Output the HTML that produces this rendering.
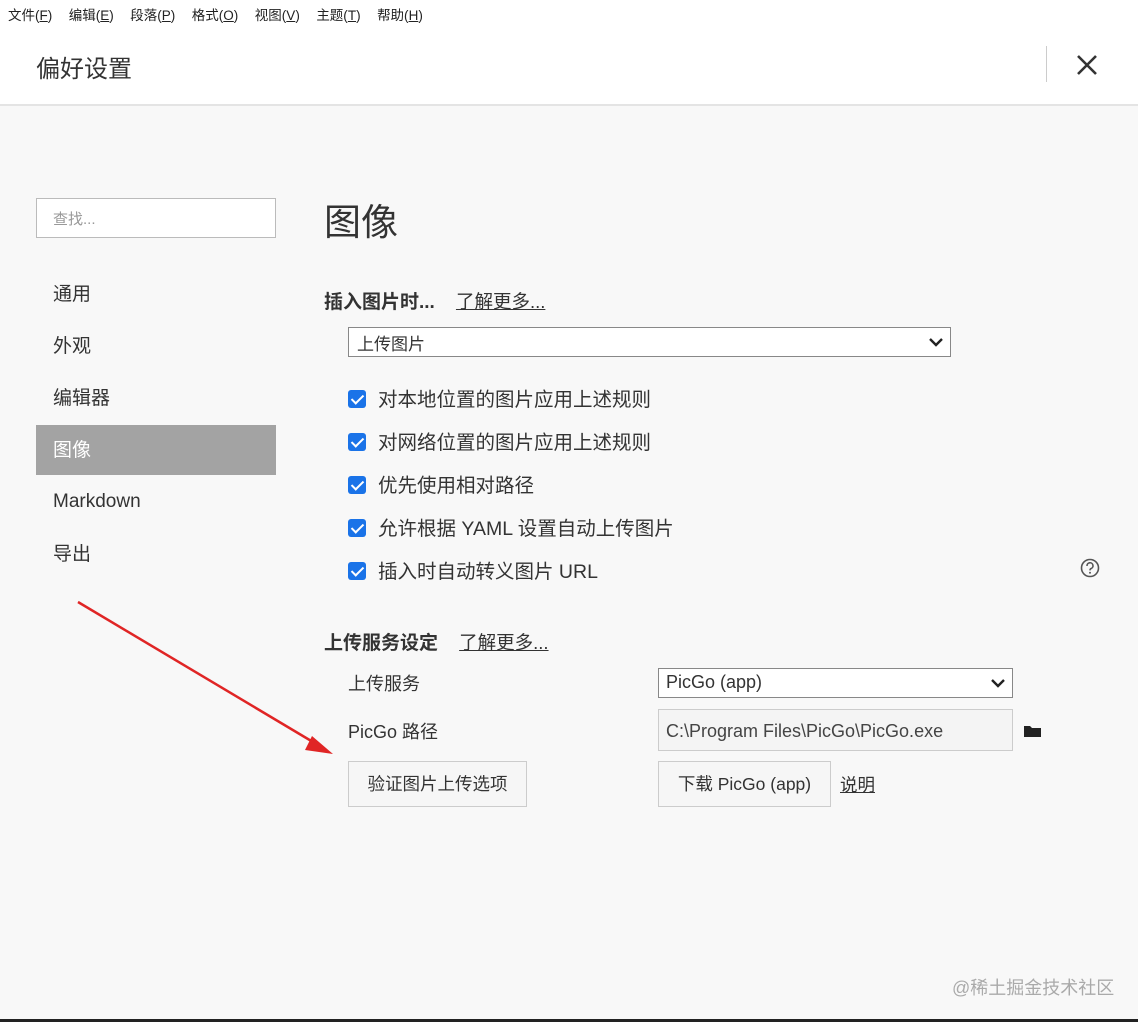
<!DOCTYPE html>
<html><head><meta charset="utf-8"><style>
*{box-sizing:border-box;margin:0;padding:0}
body{width:1138px;height:1022px;background:#f8f8f8;font-family:"Liberation Sans","Noto Sans CJK SC",sans-serif;color:#333;position:relative;overflow:hidden}
.abs{position:absolute}
.top{left:0;top:0;width:1138px;height:106px;background:#fff;border-bottom:2px solid #e4e4e4}
.menu{left:8px;top:4px;font-size:13.5px;color:#222;white-space:nowrap}
.menu span{margin-right:16.5px}
.title{left:36px;top:49px;font-size:24px;color:#333}
.sep{left:1046px;top:46px;width:1px;height:36px;background:#ccc}
.search{left:36px;top:198px;width:240px;height:40px;border:1px solid #bbb;background:#fff;font-size:15px;color:#999;padding:9px 16px}
.nav{left:36px;width:240px;height:50px;font-size:19px;padding:12px 17px;color:#333}
.nav.sel{background:#a3a3a3;color:#fff}
.h1{left:324px;top:192px;font-size:37px;color:#333}
.h2{font-size:19px;font-weight:bold;color:#333;white-space:nowrap}
.link{font-size:18.5px;text-decoration:underline;color:#333;font-weight:normal}
.sel1{left:348px;top:327px;width:603px;height:30px;border:1px solid #888;background:#fff;font-size:17px;padding:2px 8px}
.cb{left:348px;font-size:19.5px;color:#333;white-space:nowrap}
.cb i{display:inline-block;width:18px;height:18px;background:#1a73e8;border-radius:3px;vertical-align:-2px;margin-right:12px;position:relative}
.cb i:after{content:"";position:absolute;left:6px;top:2px;width:5px;height:10px;border:solid #fff;border-width:0 2.5px 2.5px 0;transform:rotate(45deg)}
.lbl{left:348px;font-size:18px}
.box{left:658px;width:355px;border:1px solid #aaa;font-size:18px;padding:0 7px;white-space:nowrap}
.btn{height:46px;border:1px solid #ccc;background:#f6f6f6;font-size:17.5px;text-align:center;line-height:44px;white-space:nowrap}
</style></head><body>
<div class="abs top"></div>
<div class="abs menu"><span>文件(<u>F</u>)</span><span>编辑(<u>E</u>)</span><span>段落(<u>P</u>)</span><span>格式(<u>O</u>)</span><span>视图(<u>V</u>)</span><span>主题(<u>T</u>)</span><span>帮助(<u>H</u>)</span></div>
<div class="abs title">偏好设置</div>
<div class="abs sep"></div>
<svg class="abs" style="left:1076px;top:54px" width="22" height="22"><path d="M2 2L20 20M20 2L2 20" stroke="#333" stroke-width="2.6"/></svg>
<div class="abs search">查找...</div>
<div class="abs nav" style="top:267px">通用</div>
<div class="abs nav" style="top:319px">外观</div>
<div class="abs nav" style="top:371px">编辑器</div>
<div class="abs nav sel" style="top:425px;padding-top:10px">图像</div>
<div class="abs nav" style="top:479px">Markdown</div>
<div class="abs nav" style="top:527px">导出</div>
<div class="abs h1">图像</div>
<div class="abs h2" style="left:324px;top:287px">插入图片时...&nbsp;&nbsp;&nbsp;&nbsp;<span class="link">了解更多...</span></div>
<div class="abs sel1">上传图片</div>
<svg class="abs" style="left:928px;top:336px" width="16" height="12"><path d="M2 3L8 9L14 3" stroke="#222" stroke-width="2.4" fill="none"/></svg>
<div class="abs cb" style="top:383px"><i></i>对本地位置的图片应用上述规则</div>
<div class="abs cb" style="top:426px"><i></i>对网络位置的图片应用上述规则</div>
<div class="abs cb" style="top:469px"><i></i>优先使用相对路径</div>
<div class="abs cb" style="top:512px"><i></i>允许根据 YAML 设置自动上传图片</div>
<div class="abs cb" style="top:555px"><i></i>插入时自动转义图片 URL</div>
<svg class="abs" style="left:1080px;top:558px" width="20" height="20"><circle cx="10" cy="10" r="8.5" stroke="#555" stroke-width="1.6" fill="none"/><path d="M7 8a3 3 0 1 1 4 2.6c-.8.4-1 .9-1 1.8" stroke="#555" stroke-width="1.6" fill="none"/><circle cx="10" cy="14.8" r="1" fill="#555"/></svg>
<div class="abs h2" style="left:324px;top:628px">上传服务设定&nbsp;&nbsp;&nbsp;&nbsp;<span class="link">了解更多...</span></div>
<div class="abs lbl" style="top:670px">上传服务</div>
<div class="abs box" style="top:668px;height:30px;background:#fff;line-height:27px;border-color:#888">PicGo (app)</div>
<svg class="abs" style="left:990px;top:677px" width="16" height="12"><path d="M2 3L8 9L14 3" stroke="#222" stroke-width="2.4" fill="none"/></svg>
<div class="abs lbl" style="top:718px">PicGo 路径</div>
<div class="abs box" style="top:709px;height:42px;background:#f4f4f4;line-height:42px;color:#444;border-color:#ccc">C:\Program Files\PicGo\PicGo.exe</div>
<svg class="abs" style="left:1023px;top:724px" width="20" height="14"><path d="M1 2h6l2 2h9v9H1z" fill="#222"/></svg>
<div class="abs btn" style="left:348px;top:761px;width:179px">验证图片上传选项</div>
<div class="abs btn" style="left:658px;top:761px;width:173px">下载 PicGo (app)</div>
<div class="abs" style="left:840px;top:772px;font-size:17.5px;text-decoration:underline">说明</div>
<svg class="abs" style="left:0;top:0" width="1138" height="1022"><line x1="78" y1="602" x2="318" y2="745" stroke="#e02525" stroke-width="2.5"/><path d="M333 754L312 736L305 750Z" fill="#e02525"/></svg>
<div class="abs" style="left:952px;top:974px;font-size:18px;color:#aaa">@稀土掘金技术社区</div>
<div class="abs" style="left:0;top:1019px;width:1138px;height:3px;background:#222"></div>
</body></html>
